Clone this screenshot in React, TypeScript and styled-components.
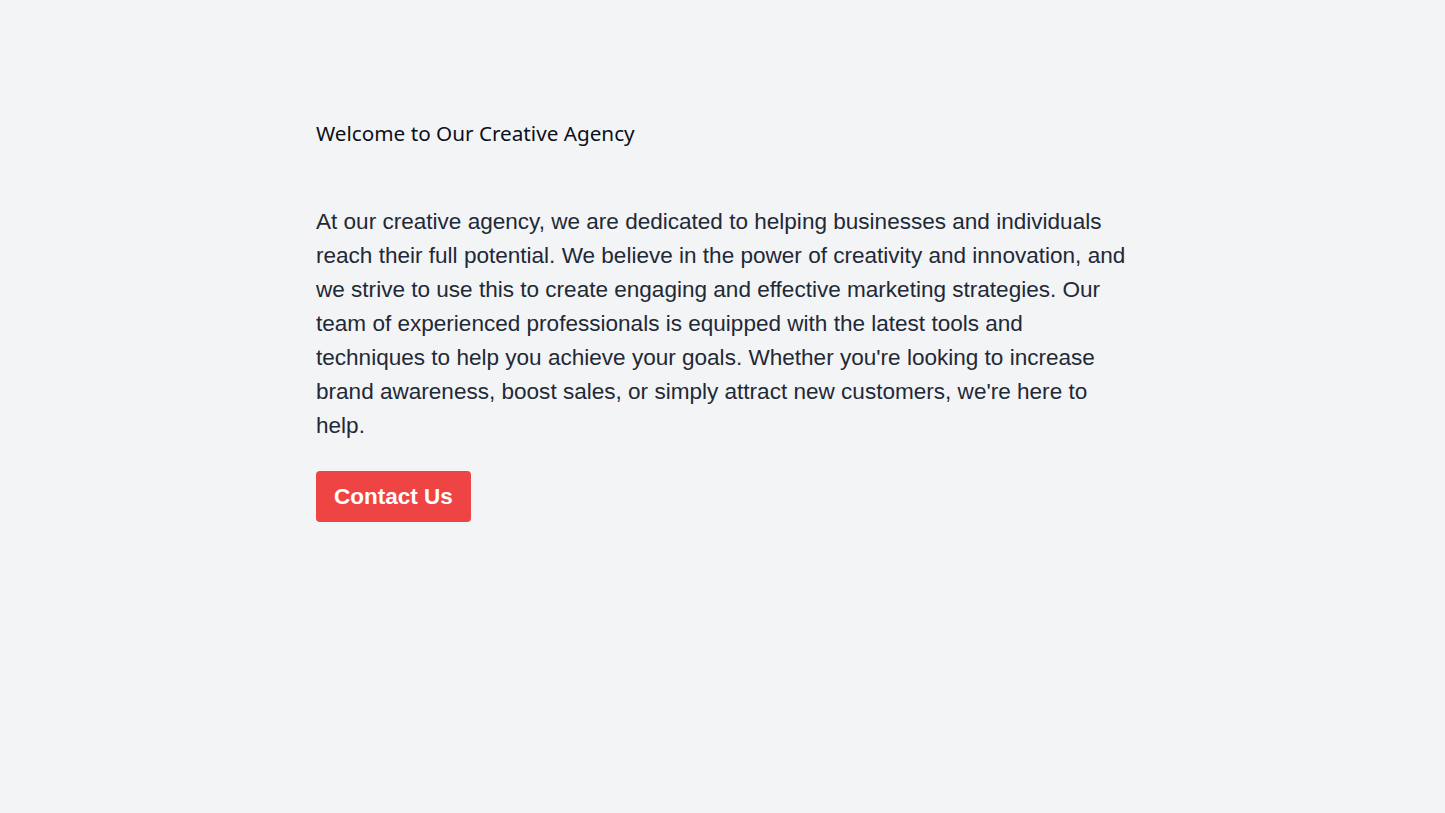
import styled, { createGlobalStyle } from 'styled-components';

const GlobalStyle = createGlobalStyle`
  html, body {
    margin: 0;
    padding: 0;
    background-color: #f3f4f6;
  }
`;

const Page = styled.main`
  min-height: 813px;
  background-color: #f3f4f6;
  padding-top: 119px;
  box-sizing: border-box;
`;

const Container = styled.section`
  width: 813px;
  margin: 0 auto;
`;

const Title = styled.h1`
  margin: 0 0 58px;
  font-family: 'Noto Sans', sans-serif;
  font-size: 20.7px;
  font-weight: 400;
  line-height: 28px;
  color: #0b0f19;
`;

const Body = styled.p`
  margin: 0 0 28px;
  font-family: 'Liberation Sans', Arial, sans-serif;
  font-size: 22.55px;
  line-height: 34px;
  color: #1f2937;
`;

const Button = styled.button`
  display: inline-block;
  padding: 12px 18px;
  border: none;
  border-radius: 4px;
  background-color: #ef4444;
  color: #ffffff;
  font-family: 'Liberation Sans', Arial, sans-serif;
  font-size: 22.5px;
  font-weight: 700;
  line-height: 27px;
  cursor: pointer;
`;

const App = () => {
  return (
    <>
      <GlobalStyle />
      <Page>
        <Container>
          <Title>Welcome to Our Creative Agency</Title>
          <Body>
            At our creative agency, we are dedicated to helping businesses and individuals
            reach their full potential. We believe in the power of creativity and innovation,
            and we strive to use this to create engaging and effective marketing strategies.
            Our team of experienced professionals is equipped with the latest tools and
            techniques to help you achieve your goals. Whether you're looking to increase
            brand awareness, boost sales, or simply attract new customers, we're here to help.
          </Body>
          <Button>Contact Us</Button>
        </Container>
      </Page>
    </>
  );
};

export default App;
